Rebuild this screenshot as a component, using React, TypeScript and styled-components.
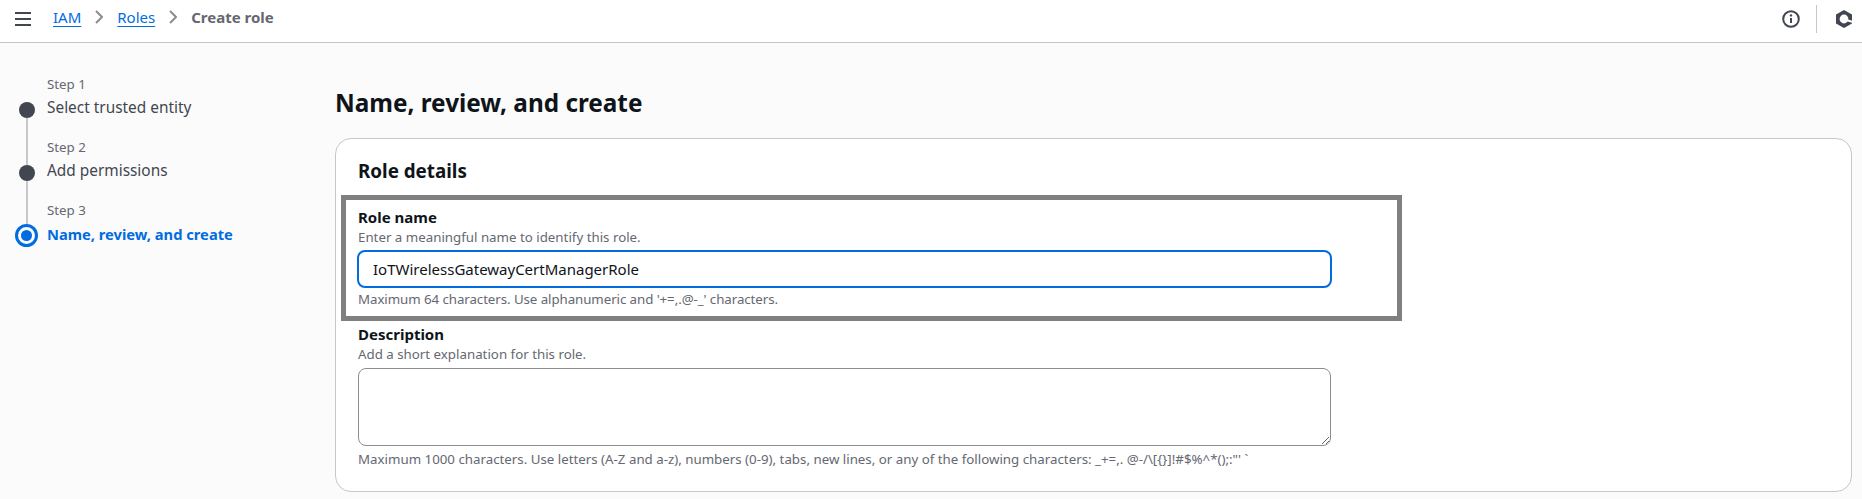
import React from "react";
import styled, { createGlobalStyle } from "styled-components";

const GlobalStyle = createGlobalStyle`
  html, body {
    margin: 0;
    padding: 0;
    background: #fbfbfb;
    font-family: "Noto Sans", "Open Sans", sans-serif;
    color: #0f141a;
  }
`;

const Page = styled.div`
  width: 1862px;
  height: 499px;
  overflow: hidden;
`;

const TopBar = styled.header`
  height: 42px;
  box-sizing: content-box;
  background: #fff;
  border-bottom: 1px solid #c6c6cd;
  display: flex;
  align-items: center;
  padding: 0 9px 0 15px;
`;

const MenuIcon = styled.svg`
  width: 16px;
  height: 14px;
  margin-right: 22px;
  margin-top: -4px;
`;

const Crumbs = styled.nav`
  display: flex;
  align-items: center;
  font-size: 15px;
  margin-top: -9px;
`;

const CrumbLink = styled.a`
  color: #006ce0;
  text-decoration: underline;
  text-underline-offset: 3px;
`;

const CrumbCurrent = styled.span`
  color: #656871;
  font-weight: 700;
`;

const Chevron = styled.svg`
  width: 8px;
  height: 14px;
  margin: 0 14px;
`;

const TopActions = styled.div`
  margin-left: auto;
  display: flex;
  align-items: center;
  margin-top: -4px;
`;

const Divider = styled.div`
  width: 1px;
  height: 28px;
  background: #c6c6cd;
  margin: 0 18px 0 16px;
`;

const Body = styled.div`
  display: flex;
`;

const Sidebar = styled.ol`
  width: 335px;
  flex: none;
  box-sizing: border-box;
  list-style: none;
  margin: 0;
  padding: 30px 0 0 15px;
`;

const Step = styled.li`
  display: grid;
  grid-template-columns: 32px 1fr;
  height: 63px;
`;

const Rail = styled.div`
  width: 23px;
  display: flex;
  flex-direction: column;
  align-items: center;
`;

const RailLine = styled.div<{ $height?: number; $hidden?: boolean }>`
  width: 2px;
  background: ${(p) => (p.$hidden ? "transparent" : "#c6c6cd")};
  ${(p) => (p.$height ? `height: ${p.$height}px; flex: none;` : "flex: 1;")}
`;

const Dot = styled.div`
  width: 16px;
  height: 16px;
  flex: none;
  border-radius: 50%;
  background: #424650;
`;

const CurrentDot = styled.div`
  width: 23px;
  height: 23px;
  flex: none;
  box-sizing: border-box;
  border: 3px solid #006ce0;
  border-radius: 50%;
  display: flex;
  align-items: center;
  justify-content: center;

  &::after {
    content: "";
    width: 11px;
    height: 11px;
    border-radius: 50%;
    background: #006ce0;
  }
`;

const StepLabel = styled.div`
  font-size: 13.3px;
  line-height: 23px;
  color: #656871;
`;

const StepTitle = styled.div<{ $current?: boolean }>`
  font-size: ${(p) => (p.$current ? "14.7px" : "15.4px")};
  line-height: 24px;
  color: ${(p) => (p.$current ? "#006ce0" : "#424650")};
  font-weight: ${(p) => (p.$current ? 700 : 400)};
`;

const Main = styled.main`
  flex: 1;
  padding-right: 10px;
`;

const PageTitle = styled.h1`
  margin: 0;
  padding: 43px 0 18px;
  font-size: 24.3px;
  line-height: 34px;
  font-weight: 700;
`;

const Card = styled.section`
  box-sizing: border-box;
  height: 354px;
  background: #fff;
  border: 1px solid #c6c6cd;
  border-radius: 16px;
  padding: 19px 22px 0;
`;

const CardTitle = styled.h2`
  margin: 0 0 22px;
  font-size: 18.8px;
  line-height: 26px;
  font-weight: 700;
`;

const Field = styled.div`
  position: relative;
  width: 975px;
  margin-bottom: 15px;
`;

const Highlight = styled.div`
  position: absolute;
  top: -11px;
  left: -17px;
  width: 1061px;
  height: 126px;
  box-sizing: border-box;
  border: 5px solid #808080;
  pointer-events: none;
`;

const Label = styled.label`
  display: block;
  font-size: 15px;
  line-height: 22px;
  font-weight: 700;
`;

const Description = styled.div<{ $tight?: boolean }>`
  font-size: 13.3px;
  line-height: 18px;
  color: #656871;
  letter-spacing: ${(p) => (p.$tight ? "-0.07px" : "normal")};
`;

const TextInput = styled.input`
  display: block;
  box-sizing: border-box;
  width: 975px;
  height: 38px;
  margin: 4px 0 2px -1px;
  padding: 0 14px;
  font: inherit;
  font-size: 15px;
  color: #0f141a;
  background: #fff;
  border: 2px solid #006ce0;
  border-radius: 8px;
  outline: none;
`;

const TextArea = styled.textarea`
  display: block;
  box-sizing: border-box;
  width: 973px;
  height: 78px;
  margin: 5px 0 4px;
  padding: 4px 14px;
  font: inherit;
  background: #fff;
  border: 1px solid #8c8c94;
  border-radius: 8px;
  outline: none;
`;

const App: React.FC = () => {
  return (
    <Page>
      <GlobalStyle />
      <TopBar>
        <MenuIcon viewBox="0 0 16 14">
          <path d="M0 1h16M0 7h16M0 13h16" stroke="#424650" strokeWidth="2" />
        </MenuIcon>
        <Crumbs>
          <CrumbLink>IAM</CrumbLink>
          <Chevron viewBox="0 0 8 14">
            <path d="M1 1l6 6-6 6" fill="none" stroke="#8c8c94" strokeWidth="2" />
          </Chevron>
          <CrumbLink>Roles</CrumbLink>
          <Chevron viewBox="0 0 8 14">
            <path d="M1 1l6 6-6 6" fill="none" stroke="#8c8c94" strokeWidth="2" />
          </Chevron>
          <CrumbCurrent>Create role</CrumbCurrent>
        </Crumbs>
        <TopActions>
          <svg width="18" height="18" viewBox="0 0 18 18">
            <circle cx="9" cy="9" r="7.8" fill="none" stroke="#424650" strokeWidth="2" />
            <path d="M9 8v5" stroke="#424650" strokeWidth="2" />
            <circle cx="9" cy="5.4" r="1.2" fill="#424650" />
          </svg>
          <Divider />
          <svg width="18" height="18" viewBox="0 0 18 18">
            <path d="M9 0l8 4.5v9L9 18l-8-4.5v-9z" fill="#424650" />
            <circle cx="9" cy="9" r="4.4" fill="#fff" />
            <path d="M9.5 9.5L18 12" stroke="#fff" strokeWidth="2" />
          </svg>
        </TopActions>
      </TopBar>
      <Body>
        <Sidebar>
          <Step>
            <Rail>
              <RailLine $height={29} $hidden />
              <Dot />
              <RailLine />
            </Rail>
            <div>
              <StepLabel>Step 1</StepLabel>
              <StepTitle>Select trusted entity</StepTitle>
            </div>
          </Step>
          <Step>
            <Rail>
              <RailLine $height={29} />
              <Dot />
              <RailLine />
            </Rail>
            <div>
              <StepLabel>Step 2</StepLabel>
              <StepTitle>Add permissions</StepTitle>
            </div>
          </Step>
          <Step>
            <Rail>
              <RailLine $height={25} />
              <CurrentDot />
            </Rail>
            <div>
              <StepLabel>Step 3</StepLabel>
              <StepTitle $current>Name, review, and create</StepTitle>
            </div>
          </Step>
        </Sidebar>
        <Main>
          <PageTitle>Name, review, and create</PageTitle>
          <Card>
            <CardTitle>Role details</CardTitle>
            <Field>
              <Highlight />
              <Label>Role name</Label>
              <Description>Enter a meaningful name to identify this role.</Description>
              <TextInput readOnly value="IoTWirelessGatewayCertManagerRole" />
              <Description $tight>Maximum 64 characters. Use alphanumeric and '+=,.@-_' characters.</Description>
            </Field>
            <Field>
              <Label>Description</Label>
              <Description>Add a short explanation for this role.</Description>
              <TextArea readOnly />
              <Description>
                Maximum 1000 characters. Use letters (A-Z and a-z), numbers (0-9), tabs, new lines, or any of the
                following characters: _+=,. @-/\[{"{}"}]!#$%^*();:"' `
              </Description>
            </Field>
          </Card>
        </Main>
      </Body>
    </Page>
  );
};

export default App;
